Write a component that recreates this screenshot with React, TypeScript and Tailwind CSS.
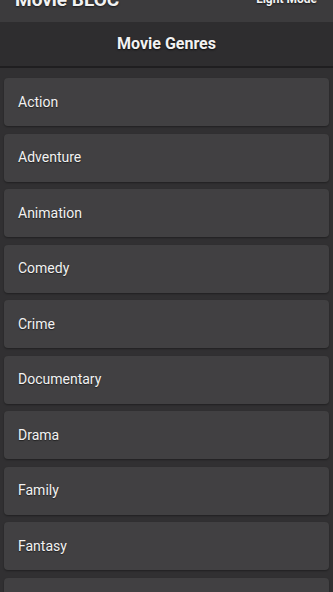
const genres = [
  "Action",
  "Adventure",
  "Animation",
  "Comedy",
  "Crime",
  "Documentary",
  "Drama",
  "Family",
  "Fantasy",
  "History",
];

export default function App() {
  return (
    <div
      className="h-[592px] w-[333px] overflow-hidden bg-[#313032] text-[#f2f2f2]"
      style={{ fontFamily: "Roboto, 'Noto Sans', sans-serif" }}
    >
      {/* app bar, scrolled mostly off the top */}
      <div className="flex h-[22px] items-end justify-between overflow-hidden bg-[#3c3b3d] pl-[15px] pr-[16px]">
        <span className="mb-[13px] text-[19px] font-bold leading-none [text-shadow:0_1px_2px_rgba(0,0,0,0.6)]">
          Movie BLOC
        </span>
        <span className="mb-[17px] text-[12px] font-bold leading-none [text-shadow:0_1px_2px_rgba(0,0,0,0.6)]">
          Light Mode
        </span>
      </div>
      <div className="flex h-[46px] items-center justify-center border-b-2 border-[#1f1e20] bg-[#2e2d2f]">
        <span className="text-[16px] font-bold [text-shadow:0_1px_2px_rgba(0,0,0,0.7)]">
          Movie Genres
        </span>
      </div>
      <div className="flex flex-col gap-[7.5px] px-[4px] pt-[10px]">
        {genres.map((g) => (
          <div
            key={g}
            className="flex h-[48px] shrink-0 items-center rounded-[4px] bg-[#414042] pl-[14px] shadow-[0_1px_2px_rgba(0,0,0,0.35)]"
          >
            <span className="text-[14px] [text-shadow:0_1px_1px_rgba(0,0,0,0.5)]">{g}</span>
          </div>
        ))}
      </div>
    </div>
  );
}
